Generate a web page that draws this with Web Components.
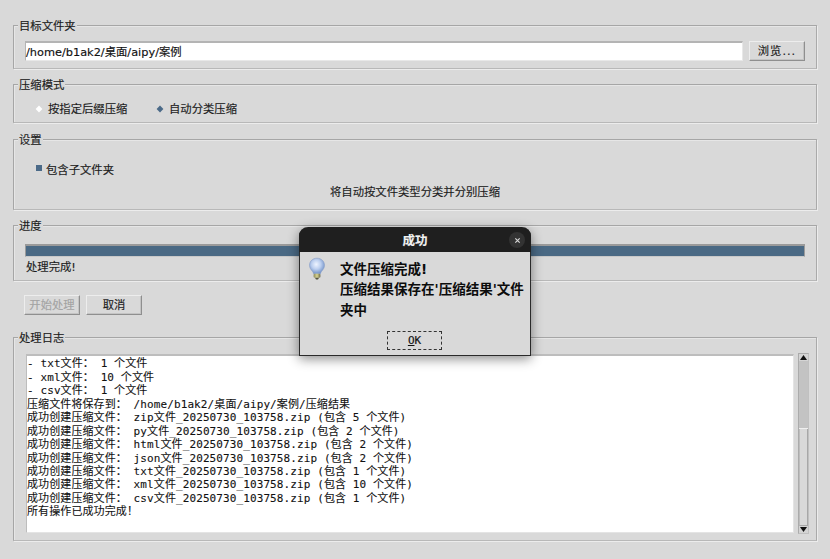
<!DOCTYPE html>
<html lang="zh">
<head>
<meta charset="utf-8">
<title>文件压缩工具</title>
<style>
html,body{margin:0;padding:0;height:100%;background:#d9d9d9;overflow:hidden}
body{font:11.33px/14px "DejaVu Sans","Noto Sans CJK SC",sans-serif;color:#1c1c1c;-webkit-text-stroke:.15px currentColor}
</style>
</head>
<body>
<tk-window>
  <tk-group label="目标文件夹" style="--h:44px;--mt:25px">
    <div style="display:flex;gap:6px;padding:16px 11px 0 11px;align-items:flex-start">
      <tk-entry style="flex:1">/home/b1ak2/桌面/aipy/案例</tk-entry>
      <tk-button style="width:56px;--ls:1px">浏览...</tk-button>
    </div>
  </tk-group>
  <tk-group label="压缩模式" style="--h:39px;--mt:15px">
    <div style="display:flex;padding:18px 0 0 20px">
      <tk-choice kind="radio" style="width:121px">按指定后缀压缩</tk-choice>
      <tk-choice kind="radio" on>自动分类压缩</tk-choice>
    </div>
  </tk-group>
  <tk-group label="设置" style="--h:71px;--mt:16px">
    <div style="padding:24px 0 0 21px"><tk-choice kind="check" on>包含子文件夹</tk-choice></div>
    <div style="text-align:center;margin-top:8px">将自动按文件类型分类并分别压缩</div>
  </tk-group>
  <tk-group label="进度" style="--h:56px;--mt:15px">
    <div style="padding:19px 11px 0 11px"><tk-progress></tk-progress><div style="margin-top:3px;padding-left:1px">处理完成!</div></div>
  </tk-group>
  <div style="display:flex;gap:6px;padding:14px 0 0 24px">
    <tk-button disabled style="width:56px">开始处理</tk-button>
    <tk-button style="width:56px">取消</tk-button>
  </div>
  <tk-group label="处理日志" style="--h:204px;--mt:22px">
    <div style="display:flex;gap:4px;padding:17px 7px 0 12px;align-items:flex-start">
      <tk-log style="flex:1">
<div>- json文件&#xFF1A; 2 个文件</div>
<div>- txt文件&#xFF1A; 1 个文件</div>
<div>- xml文件&#xFF1A; 10 个文件</div>
<div>- csv文件&#xFF1A; 1 个文件</div>
<div>压缩文件将保存到&#xFF1A; /home/b1ak2/桌面/aipy/案例/压缩结果</div>
<div>成功创建压缩文件&#xFF1A; zip文件_20250730_103758.zip (包含 5 个文件)</div>
<div>成功创建压缩文件&#xFF1A; py文件_20250730_103758.zip (包含 2 个文件)</div>
<div>成功创建压缩文件&#xFF1A; html文件_20250730_103758.zip (包含 2 个文件)</div>
<div>成功创建压缩文件&#xFF1A; json文件_20250730_103758.zip (包含 2 个文件)</div>
<div>成功创建压缩文件&#xFF1A; txt文件_20250730_103758.zip (包含 1 个文件)</div>
<div>成功创建压缩文件&#xFF1A; xml文件_20250730_103758.zip (包含 10 个文件)</div>
<div>成功创建压缩文件&#xFF1A; csv文件_20250730_103758.zip (包含 1 个文件)</div>
<div>所有操作已成功完成&#xFF01;</div>
      </tk-log>
      <tk-scrollbar></tk-scrollbar>
    </div>
  </tk-group>
  <tk-dialog heading="成功">
    <div>文件压缩完成!</div>
    <div>压缩结果保存在'压缩结果'文件</div>
    <div>夹中</div>
  </tk-dialog>
</tk-window>
<script>
function def(name, css, html){
  customElements.define(name, class extends HTMLElement{
    constructor(){super();const s=this.attachShadow({mode:'open'});
      s.innerHTML='<style>'+css+'</style>'+(typeof html==='function'?html(this):html);}
  });
}
def('tk-window',':host{display:block;position:relative;width:830px;height:559px;overflow:hidden}','<slot></slot>');
def('tk-group',`:host{display:block;box-sizing:border-box;height:var(--h);margin:var(--mt) 13px 0 13px;width:804px;
  border:1px solid #a6a6a6;border-right-color:#aaa;border-bottom-color:#b8b8b8;box-shadow:1px 1px 0 #ececec,inset 1px 1px 0 #e6e6e6}
 .t{display:block;width:max-content;height:14px;margin:-7px 0 -8px 4px;padding:0 1px;background:#d9d9d9;font-size:11.33px;line-height:14px;position:relative}
`,h=>`<div class="t">${h.getAttribute('label')}</div><slot></slot>`);
def('tk-entry',`:host{display:block;box-sizing:border-box;height:20px;background:#fff;border:1px solid #b4b4b4;border-right-color:#e8e8e8;border-bottom-color:#e8e8e8;border-top-width:2px;line-height:18px;font-size:11.33px;color:#111;white-space:nowrap}`,'<slot></slot>');
def('tk-button',`:host{display:flex;align-items:center;justify-content:center;box-sizing:border-box;height:20px;background:#d9d9d9;border:1px solid #ededed;border-right-color:#8f8f8f;border-bottom-color:#8f8f8f;box-shadow:inset -1px -1px 0 #c4c4c4;letter-spacing:var(--ls,0);white-space:nowrap;color:#1c1c1c}
 :host([disabled]){color:#a3a3a3}`,'<span><slot></slot></span>');
def('tk-choice',`:host{display:flex;align-items:center;height:14px;white-space:nowrap}
 svg{width:10px;height:10px;margin-right:4px;flex:none}
 :host([kind=check]) svg{margin-right:2px;margin-left:-1px}
 `,h=>{const on=h.hasAttribute('on');
   if(h.getAttribute('kind')==='check')return `<svg viewBox="0 0 10 10"><rect x="2" y="0" width="6" height="6" fill="#4b6a88"/></svg><slot></slot>`;
   return `<svg viewBox="0 0 10 10"><path d="M5 1.6 8.4 5 5 8.4 1.6 5Z" fill="${on?'#4b6a88':'#fff'}"/></svg><slot></slot>`;});
def('tk-progress',`:host{display:block;box-sizing:border-box;height:13px;background:#4a6984;border:1px solid #9a9a9a;border-top-width:2px;border-bottom-color:#c8c8c8}`,'');
def('tk-log',`:host{display:block;box-sizing:border-box;height:179px;background:#fff;border:1px solid #bdbdbd;border-top-width:2px;border-right-color:#e4e4e4;border-bottom-color:#e4e4e4;overflow:hidden;font:11px/13.45px "DejaVu Sans Mono","Noto Sans CJK SC",monospace;letter-spacing:.1px;color:#111;white-space:nowrap;-webkit-text-stroke:.1px currentColor}
 ::slotted(div){white-space:pre;height:13.45px}
 .in{margin-top:-12px}`,'<div class="in"><slot></slot></div>');
def('tk-scrollbar',`:host{display:flex;flex-direction:column;box-sizing:border-box;width:11px;height:181px;margin-top:-1px;border:1px solid #ababab;border-right-color:#c0c0c0;border-bottom-color:#c0c0c0;background:#d9d9d9}
 .a{height:7px;flex:none;display:flex;align-items:center;justify-content:center;background:#d4d4d4}
 .th{height:67px;background:#c3c3c3;flex:none;border-bottom:1px solid #efefef}
 .tr{flex:1;border-right:1px solid #a8a8a8;border-left:1px solid #bdbdbd;border-bottom:1px solid #a8a8a8}
 svg{width:7px;height:5px}`,`<div class="a"><svg viewBox="0 0 7 5"><path d="M3.5 0 7 5H0Z" fill="#111"/></svg></div><div class="th"></div><div class="tr"></div><div class="a"><svg viewBox="0 0 7 5"><path d="M0 0H7L3.5 5Z" fill="#111"/></svg></div>`);
def('tk-dialog',`:host{position:absolute;left:299px;top:227px;width:232px;height:129px;box-sizing:border-box;display:flex;flex-direction:column;background:#d9d9d9;border-radius:9px 9px 0 0;border:1px solid #2a2a2a;border-top:0;
  box-shadow:0 3px 12px rgba(0,0,0,.45)}
 .bar{height:25px;flex:none;background:#1f1f1f;border-radius:9px 9px 0 0;margin:0 -1px;display:flex;align-items:center;justify-content:center;color:#f2f2f2;font-weight:700;font-size:12.5px;position:relative;padding-top:3px;box-sizing:border-box}
 .x{position:absolute;right:6px;top:5px;width:16px;height:16px;border-radius:50%;background:#333;display:flex;align-items:center;justify-content:center}
 .x svg{width:7px;height:7px}
 .body{display:flex;flex:1;padding:6px 0 0 8px}
 .bulb{width:18px;height:24px;flex:none;margin-top:-1px}
 .msg{margin-left:14px;font:700 13.5px/20.3px "DejaVu Sans","Noto Sans CJK SC",sans-serif;color:#0c0c0c;white-space:nowrap;margin-top:1px;-webkit-text-stroke:0}
 .foot{display:flex;padding:0 0 5px 87px}
 .ok{box-sizing:border-box;width:55px;height:19px;display:flex;align-items:center;justify-content:center;outline:1px dashed #333;outline-offset:-1px;font:11px/14px "DejaVu Sans Mono",monospace;color:#111}
 u{text-decoration-thickness:1px}`,
 h=>`<div class="bar">${h.getAttribute('heading')}<span class="x"><svg viewBox="0 0 8 8"><path d="M1.5 1.5 6.5 6.5M6.5 1.5 1.5 6.5" stroke="#d8d8d8" stroke-width="1.3"/></svg></span></div>
 <div class="body"><svg class="bulb" viewBox="0 0 18 24"><defs><radialGradient id="g" cx=".45" cy=".4" r=".62"><stop offset="0" stop-color="#eef4ff"/><stop offset=".5" stop-color="#bccfef"/><stop offset="1" stop-color="#6f8fc6"/></radialGradient><linearGradient id="b" x1="0" x2="1"><stop offset="0" stop-color="#8c8a5e"/><stop offset=".5" stop-color="#d8d48e"/><stop offset="1" stop-color="#6c6a4c"/></linearGradient></defs>
 <path d="M9 1.2C4.6 1.2 1.5 4.3 1.5 8.2c0 3 1.7 4.6 3 6.2.6.8.9 1.5 1 2.3h7c.1-.8.4-1.5 1-2.3 1.3-1.6 3-3.2 3-6.2 0-3.9-3.1-7-7.5-7Z" fill="url(#g)" stroke="#8aa0c8" stroke-width=".6"/>
 <rect x="5.6" y="16.8" width="6.8" height="4" rx="1" fill="url(#b)"/><path d="M7 20.8h4l-1 1.6H8Z" fill="#55553f"/></svg>
 <div class="msg"><slot></slot></div></div>
 <div class="foot"><div class="ok"><span><u>O</u>K</span></div></div>`);
</script>
</body>
</html>
